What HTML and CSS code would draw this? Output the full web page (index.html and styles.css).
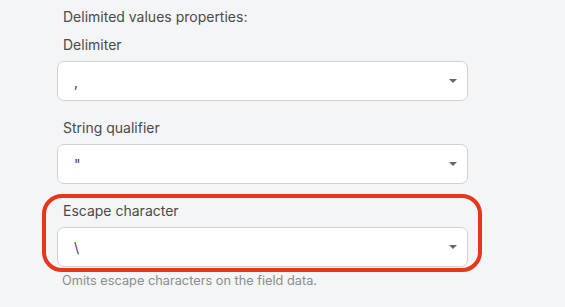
FILE: index.html
```html
<!DOCTYPE html>
<html>
<head>
<meta charset="utf-8">
<link rel="stylesheet" href="styles.css">
</head>
<body>
<div class="panel">
  <div class="heading">Delimited values properties:</div>
  <div class="field">
    <div class="label">Delimiter</div>
    <div class="select"><span class="value">,</span><span class="caret"></span></div>
  </div>
  <div class="field">
    <div class="label">String qualifier</div>
    <div class="select"><span class="value">"</span><span class="caret"></span></div>
  </div>
  <div class="field field-last">
    <div class="label">Escape character</div>
    <div class="select"><span class="value">\</span><span class="caret"></span></div>
    <div class="hint">Omits escape characters on the field data.</div>
  </div>
</div>
<div class="highlight"></div>
</body>
</html>
```
FILE: styles.css
```css
html, body {
  margin: 0;
  padding: 0;
  background: #f4f5f6;
  font-family: Inter, "Liberation Sans", sans-serif;
}
body {
  width: 565px;
  height: 307px;
  position: relative;
  overflow: hidden;
}
.panel {
  padding: 8px 0 0 57px;
  width: 411px;
}
.heading {
  padding-left: 6px;
  font-size: 14px;
  line-height: 18px;
  color: #4a4a4a;
  margin-bottom: 10px;
}
.field {
  margin-bottom: 18px;
}
.field-last {
  margin-bottom: 0;
}
.label {
  padding-left: 6px;
  font-size: 14px;
  line-height: 18px;
  color: #4a4a4a;
  margin-bottom: 7px;
}
.select {
  box-sizing: border-box;
  height: 40px;
  background: #fff;
  border: 1px solid #d2d2d2;
  border-radius: 7px;
  display: flex;
  align-items: center;
  justify-content: space-between;
  padding: 0 10px 0 16px;
}
.value {
  font-size: 14px;
  color: #444;
}
.caret {
  width: 0;
  height: 0;
  border-left: 4px solid transparent;
  border-right: 4px solid transparent;
  border-top: 4px solid #666;
}
.hint {
  margin-top: 6px;
  padding-left: 5px;
  font-size: 12.75px;
  line-height: 16px;
  color: #8c8c8c;
}
.highlight {
  position: absolute;
  left: 42px;
  top: 194px;
  width: 440px;
  height: 78px;
  box-sizing: border-box;
  border: 4px solid #e8361b;
  border-radius: 20px;
}
```
